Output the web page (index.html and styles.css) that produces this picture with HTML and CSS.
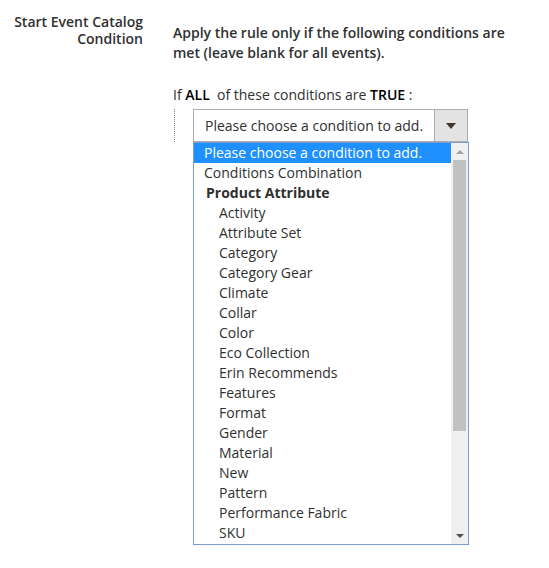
FILE: index.html
```html
<!DOCTYPE html>
<html>
<head>
<meta charset="utf-8">
<link rel="stylesheet" href="styles.css">
</head>
<body>
<div class="field">
  <div class="label">Start Event Catalog<br>Condition</div>
  <div class="control">
    <p class="note">Apply the rule only if the following conditions are met (leave blank for all events).</p>
    <p class="rule">If <b>ALL</b>&nbsp; of these conditions are <b>TRUE</b> :</p>
    <div class="tree">
      <div class="select-wrap">
        <div class="select">
          <span class="select-text">Please choose a condition to add.</span>
          <span class="select-arrow"><span class="tri-down"></span></span>
        </div>
        <div class="dropdown">
          <div class="options">
            <div class="opt selected">Please choose a condition to add.</div>
            <div class="opt">Conditions Combination</div>
            <div class="group">Product Attribute</div>
            <div class="opt sub">Activity</div>
            <div class="opt sub">Attribute Set</div>
            <div class="opt sub">Category</div>
            <div class="opt sub">Category Gear</div>
            <div class="opt sub">Climate</div>
            <div class="opt sub">Collar</div>
            <div class="opt sub">Color</div>
            <div class="opt sub">Eco Collection</div>
            <div class="opt sub">Erin Recommends</div>
            <div class="opt sub">Features</div>
            <div class="opt sub">Format</div>
            <div class="opt sub">Gender</div>
            <div class="opt sub">Material</div>
            <div class="opt sub">New</div>
            <div class="opt sub">Pattern</div>
            <div class="opt sub">Performance Fabric</div>
            <div class="opt sub">SKU</div>
          </div>
          <div class="scrollbar">
            <span class="sb-up"></span>
            <div class="sb-track"><div class="sb-thumb"></div></div>
            <span class="sb-down"></span>
          </div>
        </div>
      </div>
    </div>
  </div>
</div>
</body>
</html>
```
FILE: styles.css
```css
* { box-sizing: border-box; }
html, body { margin: 0; padding: 0; background: #fff; }
body {
  font-family: "Open Sans", "Liberation Sans", sans-serif;
  font-size: 14px;
  color: #303030;
}
.field {
  display: grid;
  grid-template-columns: 143px 1fr;
  column-gap: 30px;
  padding-top: 13px;
}
.label {
  text-align: right;
  font-weight: 600;
  line-height: 17px;
}
.control { padding-top: 10px; width: 345px; }
.note {
  margin: 0;
  font-weight: 600;
  line-height: 20px;
}
.rule {
  margin: 22px 0 0 0;
  line-height: 20px;
}
.rule b { font-weight: 600; color: #000; }
.tree {
  margin-top: 4px;
  padding-left: 20px;
  position: relative;
}
.tree::before {
  content: "";
  position: absolute;
  left: 1px;
  top: 0;
  height: 33px;
  border-left: 1px dotted #888;
}
.select-wrap { width: 275px; position: relative; }
.select {
  display: flex;
  height: 33px;
  border: 1px solid #adadad;
  background: #fff;
}
.select-text {
  flex: 1;
  padding-left: 11px;
  line-height: 31px;
}
.select-arrow {
  width: 33px;
  background: #e3e3e3;
  border-left: 1px solid #adadad;
  display: flex;
  align-items: center;
  justify-content: center;
}
.tri-down {
  width: 0; height: 0;
  border-left: 5px solid transparent;
  border-right: 5px solid transparent;
  border-top: 6px solid #41362f;
}
.dropdown {
  display: flex;
  width: 276px;
  height: 403px;
  border: 1px solid #7a9cd3;
  background: #fff;
  overflow: hidden;
}
.options { flex: 1; }
.opt {
  height: 20px;
  line-height: 20px;
  padding-left: 10px;
  white-space: nowrap;
}
.opt.selected { background: #1e90ff; color: #fff; }
.opt.sub { padding-left: 25px; }
.group {
  height: 20px;
  line-height: 20px;
  padding-left: 12px;
  font-weight: 700;
}
.scrollbar {
  width: 17px;
  background: #f0f0f0;
  display: flex;
  flex-direction: column;
  align-items: center;
}
.sb-up, .sb-down {
  height: 17px;
  display: flex;
  align-items: center;
  justify-content: center;
}
.sb-up::before {
  content: "";
  border-left: 4px solid transparent;
  border-right: 4px solid transparent;
  border-bottom: 4px solid #a3a3a3;
}
.sb-down::before {
  content: "";
  border-left: 4px solid transparent;
  border-right: 4px solid transparent;
  border-top: 4px solid #505050;
}
.sb-track { flex: 1; width: 100%; padding: 0 2px; }
.sb-thumb { height: 271px; background: #c1c1c1; }
```
